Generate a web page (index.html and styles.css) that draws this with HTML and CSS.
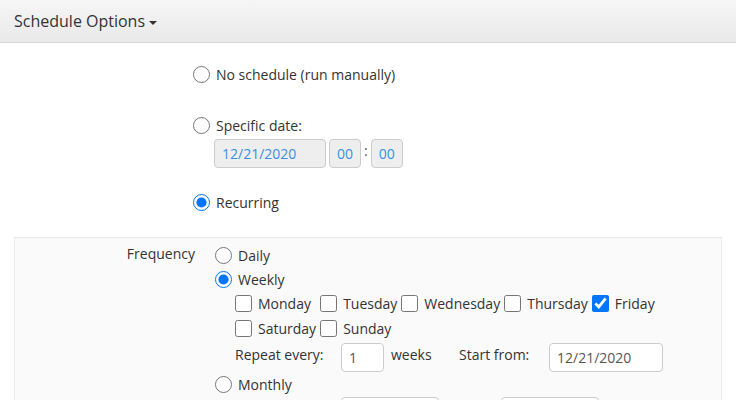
FILE: index.html
```html
<!DOCTYPE html>
<html>
<head>
<meta charset="utf-8">
<link rel="stylesheet" href="styles.css">
</head>
<body>
<header class="bar">
  <span class="title">Schedule Options</span><span class="caret"></span>
</header>
<main class="content">
  <div class="options">
    <label class="opt opt-first"><input type="radio" name="sched" class="radio"><span>No schedule (run manually)</span></label>
    <label class="opt opt-second"><input type="radio" name="sched" class="radio"><span>Specific date:</span></label>
    <div class="date-row">
      <input class="field field-muted field-date" value="12/21/2020" readonly>
      <input class="field field-muted field-time" value="00" readonly>
      <span class="colon">:</span>
      <input class="field field-muted field-time" value="00" readonly>
    </div>
    <label class="opt opt-third"><input type="radio" name="sched" class="radio" checked><span>Recurring</span></label>
  </div>

  <section class="panel">
    <div class="form-row">
      <div class="row-label">Frequency</div>
      <div class="row-ctrl">
        <label class="radio-row"><input type="radio" name="freq" class="radio"><span>Daily</span></label>
        <label class="radio-row"><input type="radio" name="freq" class="radio" checked><span>Weekly</span></label>
        <div class="days">
          <label class="day"><input type="checkbox" class="check"><span>Monday</span></label>
          <label class="day"><input type="checkbox" class="check"><span>Tuesday</span></label>
          <label class="day"><input type="checkbox" class="check"><span>Wednesday</span></label>
          <label class="day"><input type="checkbox" class="check"><span>Thursday</span></label>
          <label class="day"><input type="checkbox" class="check" checked><span>Friday</span></label>
          <label class="day"><input type="checkbox" class="check"><span>Saturday</span></label>
          <label class="day"><input type="checkbox" class="check"><span>Sunday</span></label>
        </div>
        <div class="repeat-row">
          <span class="repeat-label">Repeat every:</span>
          <input class="field field-num" value="1">
          <span class="weeks">weeks</span>
          <span class="start-label">Start from:</span>
          <input class="field field-start" value="12/21/2020">
        </div>
        <label class="radio-row"><input type="radio" name="freq" class="radio"><span>Monthly</span></label>
        <div class="month-row">
          <input class="field field-month">
          <input class="field field-month">
        </div>
      </div>
    </div>
  </section>
</main>
</body>
</html>
```

FILE: styles.css
```css
html, body {
  margin: 0;
  padding: 0;
  overflow: hidden;
  background: #fff;
}

body {
  font-family: "Open Sans", "Liberation Sans", sans-serif;
  font-size: 14px;
  color: #333;
}

.bar {
  height: 42px;
  border-bottom: 1px solid #d8d8d8;
  background: linear-gradient(to bottom, #f6f6f6, #e9e9e9);
  padding-left: 14px;
  display: flex;
  align-items: center;
}

.title {
  font-size: 16px;
  color: #333;
}

.caret {
  display: inline-block;
  width: 0;
  height: 0;
  margin-left: 4px;
  margin-top: 3px;
  border-top: 4px solid #333;
  border-left: 4px solid transparent;
  border-right: 4px solid transparent;
}

.options {
  padding-left: 193px;
  display: flex;
  flex-direction: column;
}

.opt {
  display: flex;
  align-items: center;
  height: 20px;
  gap: 6px;
}

.opt-first { margin-top: 21px; }
.opt-second { margin-top: 31px; }
.opt-third { margin-top: 24px; }

.radio {
  width: 17px;
  height: 17px;
  margin: 0;
  flex: none;
}

.check {
  width: 17px;
  height: 17px;
  margin: 0;
  flex: none;
}

.date-row {
  margin-top: 4px;
  padding-left: 21px;
  display: flex;
  align-items: center;
  gap: 3px;
  height: 29px;
}

.field {
  box-sizing: border-box;
  height: 29px;
  border: 1px solid #ccc;
  border-radius: 4px;
  font-family: "Open Sans", "Liberation Sans", sans-serif;
  font-size: 14px;
  color: #555;
  background: #fff;
  padding: 0 7px;
  margin: 0;
  outline: none;
}

.field-muted {
  background: #eee;
  color: #3790e6;
}

.field-date { width: 112px; }

.field-time {
  width: 32px;
  padding: 0;
  text-align: center;
}

.colon {
  color: #555;
  line-height: 1;
  position: relative;
  top: -3px;
}

.panel {
  margin: 25px 0 0 14px;
  width: 706px;
  height: 300px;
  background: #fafafa;
  border: 1px solid #ebebeb;
  padding-top: 5px;
}

.form-row {
  display: grid;
  grid-template-columns: 180px 1fr;
  column-gap: 20px;
}

.row-label {
  text-align: right;
  line-height: 22px;
}

.row-ctrl {
  display: flex;
  flex-direction: column;
}

.radio-row {
  display: flex;
  align-items: center;
  gap: 6px;
  height: 24px;
}

.days {
  margin-left: 20px;
  display: grid;
  grid-template-columns: repeat(5, auto);
  justify-content: start;
  column-gap: 4px;
}

.day {
  display: flex;
  align-items: center;
  gap: 6px;
  height: 25px;
}

.repeat-row {
  margin-top: 2px;
  margin-left: 20px;
  display: flex;
  align-items: flex-start;
  height: 29px;
  line-height: 24px;
}

.repeat-label { width: 106px; flex: none; }

.field-num { width: 43px; }

.weeks {
  width: 68px;
  margin-left: 7px;
  flex: none;
}

.start-label { width: 90px; flex: none; }

.field-start { width: 114px; }

.month-row {
  margin-top: 1px;
  margin-left: 126px;
  display: flex;
  gap: 62px;
}

.field-month { width: 98px; }
```
